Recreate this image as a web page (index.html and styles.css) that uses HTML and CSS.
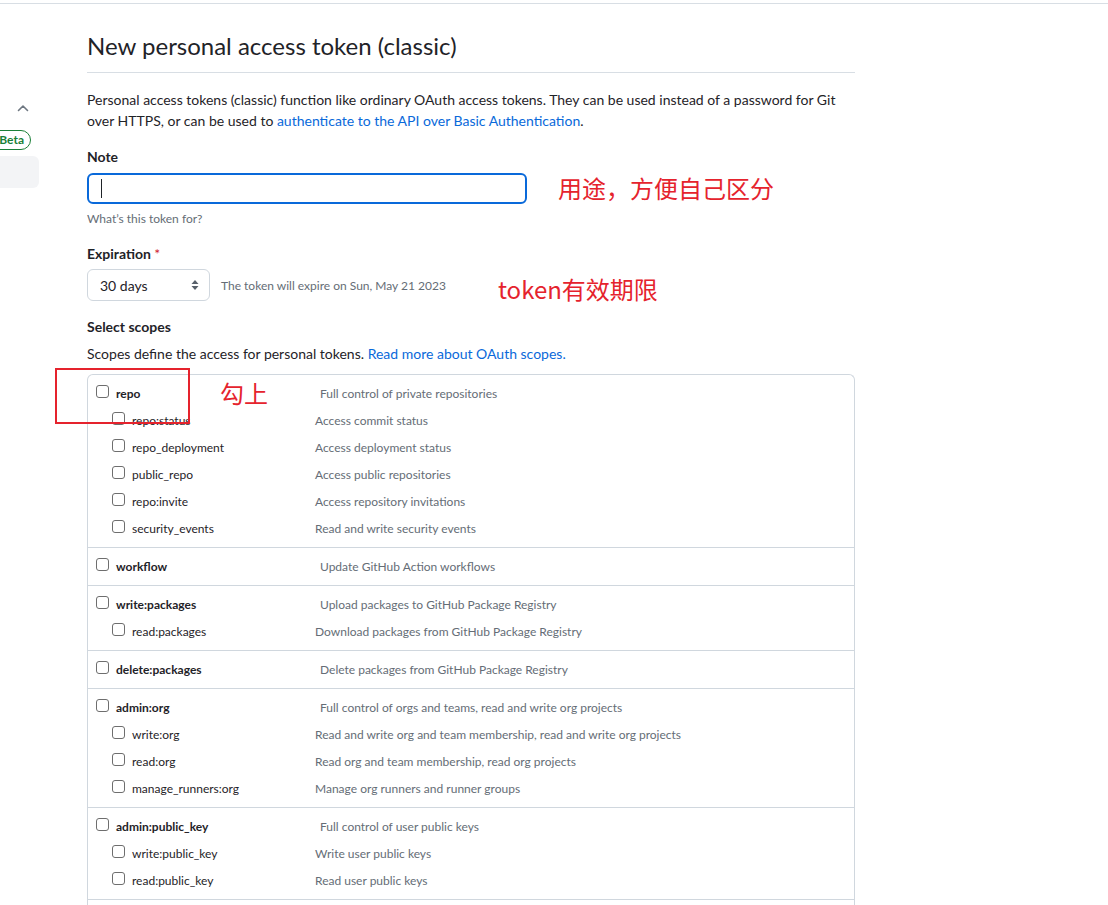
FILE: index.html
```html
<!DOCTYPE html>
<html lang="en">
<head>
<meta charset="utf-8">
<title>New personal access token (classic)</title>
<link rel="stylesheet" href="styles.css">
</head>
<body>
<div class="topbar"></div>
<div class="layout">
  <aside class="sidebar">
    <div class="side-chevron">
      <svg width="12" height="8" viewBox="0 0 12 8"><path d="M1.5 6.5 L6 2 L10.5 6.5" fill="none" stroke="#6e7781" stroke-width="1.6" stroke-linecap="round" stroke-linejoin="round"/></svg>
    </div>
    <div class="side-beta"><span class="badge">Beta</span></div>
    <div class="side-item"></div>
  </aside>

  <main class="main">
    <h1 class="title">New personal access token (classic)</h1>
    <p class="intro">Personal access tokens (classic) function like ordinary OAuth access tokens. They can be used instead of a password for Git over HTTPS, or can be used to <a href="#">authenticate to the API over Basic Authentication</a>.</p>

    <div class="field">
      <div class="label">Note</div>
      <div class="field-row">
        <div class="text-input"><span class="caret"></span></div>
        <span class="anno anno-note">用途，方便自己区分</span>
      </div>
      <div class="hint">What’s this token for?</div>
    </div>

    <div class="field field-exp">
      <div class="label">Expiration <span class="req">*</span></div>
      <div class="field-row">
        <div class="select">
          <span>30 days</span>
          <svg width="8" height="12" viewBox="0 0 8 12"><path d="M4 1 L7.5 5 H0.5 Z M4 11 L0.5 7 H7.5 Z" fill="#57606a"/></svg>
        </div>
        <span class="exp-note">The token will expire on Sun, May 21 2023</span>
        <span class="anno anno-exp">token有效期限</span>
      </div>
    </div>

    <div class="field field-scopes">
      <div class="label">Select scopes</div>
      <p class="scopes-desc">Scopes define the access for personal tokens. <a href="#">Read more about OAuth scopes.</a></p>
    </div>

    <div class="scopes">
      <div class="group">
        <div class="row parent"><span class="cb"></span><span class="name">repo</span><span class="desc">Full control of private repositories</span></div>
        <div class="row child"><span class="cb"></span><span class="name">repo:status</span><span class="desc">Access commit status</span></div>
        <div class="row child"><span class="cb"></span><span class="name">repo_deployment</span><span class="desc">Access deployment status</span></div>
        <div class="row child"><span class="cb"></span><span class="name">public_repo</span><span class="desc">Access public repositories</span></div>
        <div class="row child"><span class="cb"></span><span class="name">repo:invite</span><span class="desc">Access repository invitations</span></div>
        <div class="row child"><span class="cb"></span><span class="name">security_events</span><span class="desc">Read and write security events</span></div>
        <div class="mark-box"></div>
        <span class="anno anno-check">勾上</span>
      </div>
      <div class="group">
        <div class="row parent"><span class="cb"></span><span class="name">workflow</span><span class="desc">Update GitHub Action workflows</span></div>
      </div>
      <div class="group">
        <div class="row parent"><span class="cb"></span><span class="name">write:packages</span><span class="desc">Upload packages to GitHub Package Registry</span></div>
        <div class="row child"><span class="cb"></span><span class="name">read:packages</span><span class="desc">Download packages from GitHub Package Registry</span></div>
      </div>
      <div class="group">
        <div class="row parent"><span class="cb"></span><span class="name">delete:packages</span><span class="desc">Delete packages from GitHub Package Registry</span></div>
      </div>
      <div class="group">
        <div class="row parent"><span class="cb"></span><span class="name">admin:org</span><span class="desc">Full control of orgs and teams, read and write org projects</span></div>
        <div class="row child"><span class="cb"></span><span class="name">write:org</span><span class="desc">Read and write org and team membership, read and write org projects</span></div>
        <div class="row child"><span class="cb"></span><span class="name">read:org</span><span class="desc">Read org and team membership, read org projects</span></div>
        <div class="row child"><span class="cb"></span><span class="name">manage_runners:org</span><span class="desc">Manage org runners and runner groups</span></div>
      </div>
      <div class="group">
        <div class="row parent"><span class="cb"></span><span class="name">admin:public_key</span><span class="desc">Full control of user public keys</span></div>
        <div class="row child"><span class="cb"></span><span class="name">write:public_key</span><span class="desc">Write user public keys</span></div>
        <div class="row child"><span class="cb"></span><span class="name">read:public_key</span><span class="desc">Read user public keys</span></div>
      </div>
    </div>
  </main>
</div>
</body>
</html>
```
FILE: styles.css
```css
* { box-sizing: border-box; }
html, body { margin: 0; padding: 0; background: #fff; }
body {
  font-family: Lato, "Liberation Sans", sans-serif;
  color: #1f2328;
  font-size: 14px;
  line-height: 21px;
  overflow: hidden;
  height: 905px;
}
a { color: #0969da; text-decoration: none; }

.topbar { height: 4px; border-bottom: 1px solid #d8dee4; }

.layout { display: flex; }

.sidebar {
  width: 40px;
  flex: none;
  display: flex;
  flex-direction: column;
  align-items: flex-end;
  overflow: hidden;
  padding-top: 100px;
}
.side-chevron { width: 12px; height: 8px; margin-right: 11px; display: flex; }
.side-beta { margin-top: 18px; margin-right: 9px; display: flex; }
.badge {
  display: inline-block;
  height: 20px;
  line-height: 18px;
  border: 1px solid #1a7f37;
  border-radius: 10px;
  color: #1a7f37;
  font-size: 12px;
  font-weight: 700;
  padding: 0 6px 0 10px;
}
.side-item {
  margin-top: 6px;
  width: 60px;
  height: 32px;
  border-radius: 6px;
  background: #f3f4f6;
  margin-right: 1px;
}

.main {
  width: 768px;
  margin-left: 47px;
  flex: none;
  padding-top: 27px;
  position: relative;
}

.title {
  margin: 0;
  font-size: 24px;
  font-weight: 400;
  line-height: 30px;
  padding-bottom: 11px;
  border-bottom: 1px solid #d8dee4;
}

.intro { margin: 16px 0 0; }

.field { margin-top: 15px; }
.label { font-weight: 700; font-size: 14px; line-height: 21px; }
.req { color: #cf222e; font-weight: 400; }
.field-row { display: flex; align-items: center; margin-top: 6px; }

.text-input {
  width: 440px;
  height: 31px;
  border: 2px solid #0969da;
  border-radius: 6px;
  display: flex;
  align-items: center;
  padding-left: 12px;
}
.caret { width: 1px; height: 19px; background: #1f2328; }
.hint { font-size: 12px; line-height: 18px; color: #656d76; margin-top: 6px; }

.anno {
  color: #e5232d;
  font-family: "Noto Sans CJK SC", Lato, sans-serif;
  font-size: 24px;
  line-height: 24px;
}
.anno-note { margin-left: 31px; margin-top: -2px; }
.anno-exp { margin-left: 52px; margin-top: 7px; }

.field-exp { margin-top: 15px; }
.field-exp .field-row { margin-top: 5px; }
.select {
  width: 123px;
  height: 32px;
  border: 1px solid #d0d7de;
  border-radius: 6px;
  background: #fff;
  display: flex;
  align-items: center;
  justify-content: space-between;
  padding: 0 10px 0 12px;
  font-size: 14px;
}
.exp-note { font-size: 12px; color: #656d76; margin-left: 11px; }

.field-scopes { margin-top: 15px; }
.scopes-desc { margin: 6px 0 0; }

.scopes {
  margin-top: 10px;
  border: 1px solid #d0d7de;
  border-radius: 6px 6px 0 0;
  border-bottom: none;
  height: 560px;
}
.group {
  position: relative;
  padding: 5px 0 5px 8px;
  border-bottom: 1px solid #d0d7de;
}
.row {
  display: flex;
  align-items: center;
  height: 27px;
  font-size: 12px;
}
.cb {
  flex: none;
  width: 13px;
  height: 13px;
  border: 1px solid #6e6e6e;
  border-radius: 3px;
  background: #fff;
  margin-bottom: 4px;
}
.name { margin-left: 7px; }
.parent .name { width: 204px; font-weight: 700; }
.child { padding-left: 16px; }
.child .name { width: 183px; }
.desc { color: #656d76; }

.mark-box {
  position: absolute;
  left: -33px;
  top: -7px;
  width: 135px;
  height: 56px;
  border: 2px solid #e5232d;
}
.anno-check {
  position: absolute;
  left: 132px;
  top: 6px;
}
```
